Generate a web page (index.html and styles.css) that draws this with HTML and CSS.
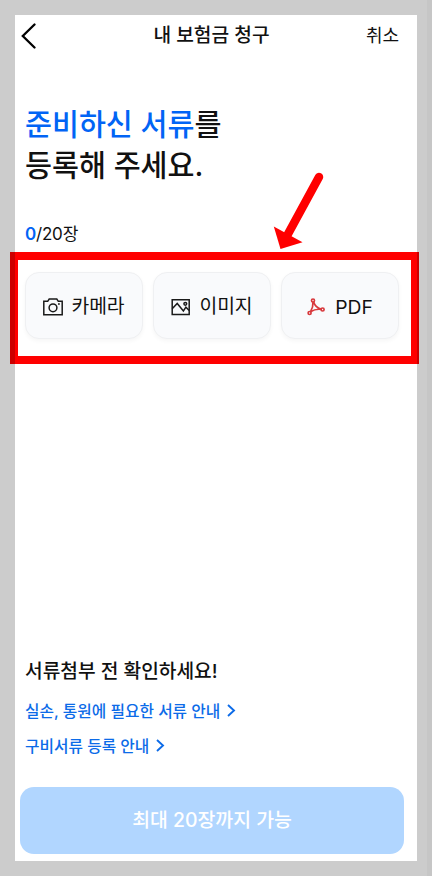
FILE: index.html
```html
<!DOCTYPE html>
<html lang="ko">
<head>
    <meta charset="UTF-8">
    <meta name="viewport" content="width=device-width, initial-scale=1.0">
    <title>내 보험금 청구</title>
    <link rel="stylesheet" href="styles.css">
</head>
<body>

    <div class="screen">
        <header class="topbar">
            <svg class="back" width="17" height="26" viewBox="0 0 17 26">
                <path d="M14.500 1.500 2.800 13 14.500 24.500"/>
            </svg>
            <h1 class="topbar-title">내 보험금 청구</h1>
            <span class="cancel">취소</span>
        </header>

        <main class="content">
            <h2 class="title"><span class="blue">준비하신 서류</span>를<br>등록해 주세요.</h2>
            <p class="count"><b>0</b>/20장</p>

            <div class="buttons">
                <button class="file-btn">
                    <svg class="icon" width="20" height="18" viewBox="0 0 20 18">
                        <path d="M.8 3.300H4.700L6.200 1h7.600l1.500 2.300h3.900v13.400H.8z"/>
                        <circle cx="10" cy="9.800" r="3.900"/>
                        <path d="M15 5.900h1.800"/>
                    </svg>
                    <span class="label">카메라</span>
                </button>
                <button class="file-btn">
                    <svg class="icon" width="20" height="18" viewBox="0 0 20 18">
                        <path d="M1.200 1.700h17v14.800h-17z"/>
                        <path d="m1.200 10.800 5-5.300 6.200 7.500 2.500-3.800 3.300 3.300"/>
                        <circle cx="14.300" cy="5.800" r="1.400"/>
                    </svg>
                    <span class="label">이미지</span>
                </button>
                <button class="file-btn pdf">
                    <svg class="icon" width="18" height="18" viewBox="0 0 18 18">
                        <circle cx="6" cy="2.500" r="1.500"/>
                        <circle cx="2.600" cy="15" r="1.500"/>
                        <circle cx="15.600" cy="11.500" r="1.500"/>
                        <path d="M6 4c.2 2.800-.4 6.200-2.500 9.700C7 11.600 10.500 10.900 14.200 11.400 10.500 10 7.600 7.400 6.700 4"/>
                    </svg>
                    <span>PDF</span>
                </button>
            </div>
        </main>

        <footer class="bottom">
            <h3 class="notice">서류첨부 전 확인하세요!</h3>
            <a class="link">
                <span>실손, 통원에 필요한 서류 안내</span>
                <svg width="9" height="13" viewBox="0 0 9 13"><path d="m1 1 6 5.500L1 12"/></svg>
            </a>
            <a class="link">
                <span>구비서류 등록 안내</span>
                <svg width="9" height="13" viewBox="0 0 9 13"><path d="m1 1 6 5.500L1 12"/></svg>
            </a>
            <button class="submit-btn">최대 20장까지 가능</button>
        </footer>
    </div>

    <!-- guide marks -->
    <div class="mark-box"></div>
    <svg class="mark-arrow" width="60" height="80" viewBox="0 0 60 80">
        <path class="shaft" d="M46 8 15 65"/>
        <path class="head" d="M.800 57.600 29.500 73.300 7.500 80z"/>
    </svg>
    <div class="frame"></div>

</body>
</html>
```
FILE: styles.css
```css
*{
    margin: 0; padding: 0;
    box-sizing: border-box;
}
body{
    font-family: Inter, "Noto Sans CJK KR", sans-serif;
    color: #111;
    background: #f8f8f8;
}
button{
    font-family: inherit;
    color: inherit;
    border: none;
}
.screen{
    display: flex;
    flex-direction: column;
    width: 427px;
    height: 876px;
    padding: 15px 28px 22px 20px;
    background: #fff;
}
.topbar{
    display: grid;
    grid-template-columns: 60px 1fr 60px;
    align-items: center;
    height: 42px;
}
.back{
    fill: none;
    stroke: #000;
    stroke-width: 2.3;
    stroke-linecap: round;
}
.topbar-title{
    padding: 0 0 4px 4px;
    text-align: center;
    font-size: 19.2px;
    font-weight: 500;
}
.cancel{
    padding-bottom: 4px;
    text-align: right;
    font-size: 18px;
}
.content{
    padding: 47px 0 0 5px;
}
.title{
    font-size: 29.3px;
    line-height: 41px;
    font-weight: 500;
}
.blue{
    color: #0164f5;
}
.count{
    margin-top: 35px;
    font-size: 17px;
    line-height: 26px;
    letter-spacing: -.2px;
}
.count b{
    color: #0164f5;
    font-weight: 600;
}
.buttons{
    display: flex;
    gap: 10px;
    margin-top: 25px;
    width: 374px;
}
.file-btn{
    display: flex;
    flex: 1;
    align-items: center;
    justify-content: center;
    gap: 8px;
    height: 67px;
    padding-top: 2px;
    font-size: 19.3px;
    background: #f9fafc;
    border: 1px solid #eff0f2;
    border-radius: 14px;
    box-shadow: 0 2px 4px rgba(0,0,0,.04);
}
.label{
    padding-bottom: 4px;
}
.icon{
    fill: none;
    stroke: #1a1a1a;
    stroke-width: 1.5;
}
.pdf{
    gap: 10px;
}
.pdf .icon{
    stroke: #d8393d;
    stroke-width: 1.7;
}
.bottom{
    display: flex;
    flex-direction: column;
    margin-top: auto;
}
.notice{
    padding-left: 5px;
    font-size: 19.2px;
    line-height: 28px;
    font-weight: 500;
}
.link{
    display: flex;
    align-items: center;
    gap: 7px;
    height: 35px;
    padding: 0 0 1px 5px;
    font-size: 15.75px;
    font-weight: 500;
    color: #0c6be8;
}
.notice + .link{
    margin-top: 8px;
}
.link svg{
    fill: none;
    stroke: #0c6be8;
    stroke-width: 1.9;
}
.submit-btn{
    width: 384px;
    height: 67px;
    margin-top: 24px;
    padding-bottom: 4px;
    font-size: 19.4px;
    font-weight: 500;
    color: #fff;
    background: #b1d6ff;
    border-radius: 14px;
}
.mark-box{
    position: absolute;
    left: 10px; top: 252px;
    width: 409px;
    height: 112px;
    border: 8px solid #f00;
}
.mark-arrow{
    position: absolute;
    left: 273px; top: 169px;
}
.shaft{
    stroke: #f00;
    stroke-width: 8.5;
    stroke-linecap: round;
}
.head{
    fill: #f00;
}
.frame{
    position: absolute;
    left: 0; top: 0;
    width: 432px;
    height: 876px;
    border: 15px solid rgba(0,0,0,.2);
}
```
